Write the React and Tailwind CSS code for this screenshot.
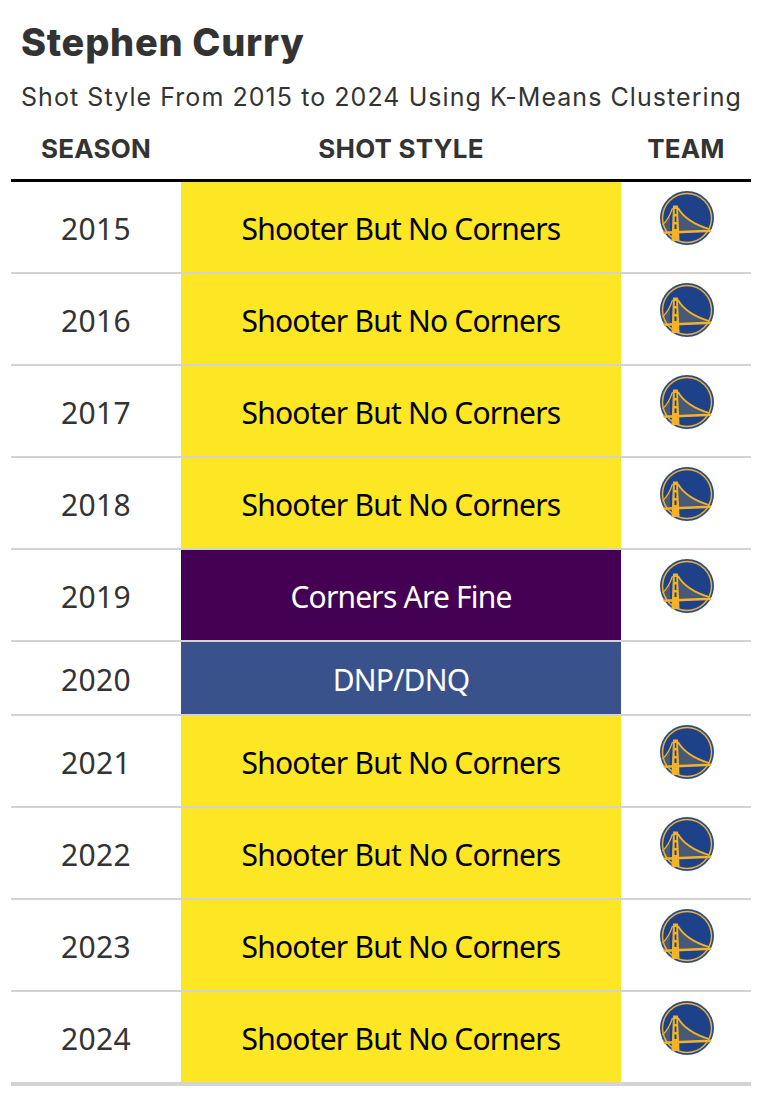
import React from "react";

const rows = [
  { season: 2015, style: "Shooter But No Corners" },
  { season: 2016, style: "Shooter But No Corners" },
  { season: 2017, style: "Shooter But No Corners" },
  { season: 2018, style: "Shooter But No Corners" },
  { season: 2019, style: "Corners Are Fine" },
  { season: 2020, style: "DNP/DNQ" },
  { season: 2021, style: "Shooter But No Corners" },
  { season: 2022, style: "Shooter But No Corners" },
  { season: 2023, style: "Shooter But No Corners" },
  { season: 2024, style: "Shooter But No Corners" },
];

const WarriorsLogo = () => (
  <svg width="54" height="54" viewBox="0 0 54 54">
    <circle cx="27" cy="27" r="27" fill="#2a4d8f" />
    <circle cx="27" cy="27" r="25.2" fill="#f2b32a" />
    <circle cx="27" cy="27" r="23.8" fill="#1d428a" />
    {/* suspenders */}
    <path d="M20 20 V40 M22 23 V40 M24 25 V40 M26 27 V40 M28 28.5 V40 M30 29.5 V40 M32 31 V40 M34 32 V40 M36 33 V40 M38 34 V40 M40 35 V40 M42 36 V40 M44 36.5 V40 M9 26 V40 M7 29 V40 M5 32 V40" stroke="#f2b32a" strokeWidth="0.6" strokeOpacity="0.7" fill="none" />
    {/* cables */}
    <path d="M18 17 Q26 31 49 38" stroke="#f2b32a" strokeWidth="1.8" fill="none" />
    <path d="M12.5 17 Q9 28 2.5 34" stroke="#f2b32a" strokeWidth="1.2" fill="none" />
    {/* tower */}
    <path d="M13 14.5 H18 L19.5 50 H11.5 Z" fill="#f2b32a" />
    <rect x="14.8" y="18" width="1.5" height="5" fill="#1d428a" />
    <rect x="14.7" y="25.5" width="1.7" height="5.5" fill="#1d428a" />
    <rect x="14.5" y="33.5" width="2" height="4.5" fill="#1d428a" />
    {/* deck */}
    <path d="M3 40.5 L51 38.5 L51 41 L4 43 Z" fill="#f2b32a" />
  </svg>
);

const App = () => {
  return (
    <div className="w-[760px] h-[1094px] bg-white pl-[11px] pr-[9px] text-[#333] font-['Noto_Sans',sans-serif]">
      <div className="pl-[10px] pt-[18px] h-[130px] font-['Inter',sans-serif]">
        <h1 className="text-[38px] leading-[48px] font-extrabold tracking-[0.7px] text-[#333] whitespace-nowrap">Stephen Curry</h1>
        <p className="mt-[13px] text-[25px] leading-[36px] tracking-[1.06px] whitespace-nowrap">Shot Style From 2015 to 2024 Using K-Means Clustering</p>
      </div>

      <div className="flex h-[52px] items-center border-b-[3px] border-black font-['Inter',sans-serif] font-bold text-[26px] tracking-[0.2px] pb-[13px]">
        <div className="w-[170px] text-center">SEASON</div>
        <div className="w-[440px] text-center">SHOT STYLE</div>
        <div className="w-[130px] text-center">TEAM</div>
      </div>

      {rows.map((row, i) => {
        const last = i === rows.length - 1;
        const dnp = row.season === 2020;
        const fine = row.season === 2019;
        return (
          <div key={row.season} className={`flex ${dnp ? "h-[74px]" : last ? "h-[94px]" : "h-[92px]"} ${last ? "border-b-4" : "border-b-2"} border-[#d3d3d3]`}>
            <div className="w-[170px] flex items-center justify-center pt-[2px] text-[30px] tracking-[0.4px]">{row.season}</div>
            <div className={`w-[440px] flex items-center justify-center pt-[2px] text-[30px] tracking-[-0.8px] ${dnp ? "bg-[#3a528b] text-white" : fine ? "bg-[#440154] text-white" : "bg-[#fde725] text-black"}`}>
              {row.style}
            </div>
            <div className="w-[130px] flex justify-center pt-[9px] pl-[2px]">
              {!dnp && <WarriorsLogo />}
            </div>
          </div>
        );
      })}
    </div>
  );
};

export default App;
